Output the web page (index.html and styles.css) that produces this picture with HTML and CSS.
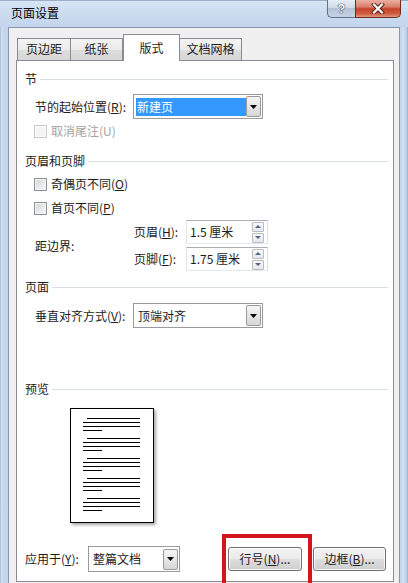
FILE: index.html
```html
<!DOCTYPE html>
<html lang="zh-CN">
<head>
<meta charset="utf-8">
<title>页面设置</title>
<link rel="stylesheet" href="styles.css">
</head>
<body>
<div class="window">
  <div class="titlebar">
    <span class="title">页面设置</span>
    <div class="caption">
      <div class="cap-help">?</div>
      <div class="cap-close">
        <svg width="14" height="11" viewBox="0 0 14 11"><path d="M3 1.5 L11 9.5 M11 1.5 L3 9.5" stroke="#4a2018" stroke-width="4" stroke-linecap="square"/><path d="M3 1.5 L11 9.5 M11 1.5 L3 9.5" stroke="#ffffff" stroke-width="2.2" stroke-linecap="square"/></svg>
      </div>
    </div>
  </div>
  <div class="frame">
    <div class="face">
      <div class="tabs">
        <div class="tab t1">页边距</div>
        <div class="tab t2">纸张</div>
        <div class="tab active">版式</div>
        <div class="tab t4">文档网格</div>
      </div>
      <div class="panel">
        <div class="head">节</div>
        <div class="row r-start">
          <span class="lbl">节的起始位置(<u>R</u>):</span>
          <div class="combo">
            <span class="val sel">新建页</span>
            <span class="drop"><svg width="7" height="4" viewBox="0 0 7 4"><polygon points="0,0 7,0 3.5,4" fill="#000"/></svg></span>
          </div>
        </div>
        <div class="chk r-endnote disabled"><span class="box"></span><span>取消尾注(U)</span></div>

        <div class="head h-hf">页眉和页脚</div>
        <div class="chk r-odd"><span class="box"></span><span>奇偶页不同(<u>O</u>)</span></div>
        <div class="chk r-first"><span class="box"></span><span>首页不同(<u>P</u>)</span></div>
        <div class="margins">
          <span class="mlabel">距边界:</span>
          <div class="spins">
            <div class="spinrow">
              <span class="slabel">页眉(<u>H</u>):</span>
              <div class="spin"><span>1.5 厘米</span>
                <span class="arrows">
                  <span class="arr"><svg width="6" height="3" viewBox="0 0 6 3"><polygon points="0,3 6,3 3,0" fill="#4f6584"/></svg></span>
                  <span class="arr"><svg width="6" height="3" viewBox="0 0 6 3"><polygon points="0,0 6,0 3,3" fill="#4f6584"/></svg></span>
                </span>
              </div>
            </div>
            <div class="spinrow">
              <span class="slabel">页脚(<u>F</u>):</span>
              <div class="spin"><span>1.75 厘米</span>
                <span class="arrows">
                  <span class="arr"><svg width="6" height="3" viewBox="0 0 6 3"><polygon points="0,3 6,3 3,0" fill="#4f6584"/></svg></span>
                  <span class="arr"><svg width="6" height="3" viewBox="0 0 6 3"><polygon points="0,0 6,0 3,3" fill="#4f6584"/></svg></span>
                </span>
              </div>
            </div>
          </div>
        </div>

        <div class="head h-page">页面</div>
        <div class="row r-valign">
          <span class="lbl">垂直对齐方式(<u>V</u>):</span>
          <div class="combo">
            <span class="val">顶端对齐</span>
            <span class="drop"><svg width="7" height="4" viewBox="0 0 7 4"><polygon points="0,0 7,0 3.5,4" fill="#000"/></svg></span>
          </div>
        </div>

        <div class="head h-preview">预览</div>
        <div class="preview">
          <svg width="82" height="113" viewBox="0 0 82 113">
            <g stroke="#000" stroke-width="1.2">
              <path d="M16 9.5H69M12 13.5H69M12 17.5H69M12 21.5H31"/>
              <path d="M16 29.5H69M12 33.5H69M12 37.5H69M12 41.5H31"/>
              <path d="M16 49.5H69M12 53.5H69M12 57.5H69M12 61.5H31"/>
              <path d="M16 69.5H69M12 73.5H69M12 77.5H69M12 81.5H31"/>
              <path d="M16 89.5H69M12 93.5H69M12 97.5H69M12 101.5H31"/>
            </g>
          </svg>
        </div>

        <div class="bottom">
          <span class="blabel">应用于(<u>Y</u>):</span>
          <div class="combo small">
            <span class="val">整篇文档</span>
            <span class="drop"><svg width="7" height="4" viewBox="0 0 7 4"><polygon points="0,0 7,0 3.5,4" fill="#000"/></svg></span>
          </div>
          <div class="btn b-line">行号(<u>N</u>)...</div>
          <div class="btn b-border">边框(<u>B</u>)...</div>
        </div>
      </div>
    </div>
  </div>
  <div class="mark"></div>
</div>
</body>
</html>
```

FILE: styles.css
```css
* { box-sizing: border-box; }
html, body { margin: 0; padding: 0; }
body {
  width: 408px;
  height: 583px;
  overflow: hidden;
  font-family: "Noto Sans CJK SC", "Noto Sans", sans-serif;
  font-size: 12px;
  line-height: 16px;
  color: #1b1b1b;
}
u { text-decoration: underline; text-underline-offset: 1px; }

.window {
  position: relative;
  width: 408px;
  height: 583px;
  display: flex;
  flex-direction: column;
  overflow: hidden;
  background: linear-gradient(90deg, #8fa4bf 0, #d4e2f2 1px, #c3d5ec 4px, #c3d5ec 400px, #d2e0f1 403px, #b8cce6 407px, #8fa4bf 408px);
}

.titlebar {
  height: 27px;
  display: flex;
  align-items: flex-start;
  padding-left: 11px;
  background: linear-gradient(#d7e4f3, #c9daee 60%, #c3d5ec);
  border-top: 1px solid #9cb0c9;
}
.title { margin-top: 4px; font-size: 12px; color: #000; }
.caption { margin-left: auto; margin-right: 7px; display: flex; margin-top: -1px; }
.cap-help {
  width: 28px;
  height: 18px;
  border: 1px solid #5f7088;
  border-top: none;
  border-right: none;
  border-radius: 0 0 0 5px;
  background: linear-gradient(#e6edf6, #d0dbe9 45%, #b3c3d7 50%, #c6d3e3 100%);
  color: #f4f6f9;
  font-family: "Liberation Sans", sans-serif;
  font-weight: bold;
  font-size: 13px;
  line-height: 17px;
  text-align: center;
  text-shadow: 0 0 1px #3d4a5c, 0 0 1px #3d4a5c, 0 0 1px #3d4a5c;
}
.cap-close {
  width: 46px;
  height: 18px;
  border: 1px solid #6e2b20;
  border-top: none;
  border-radius: 0 0 5px 0;
  background: linear-gradient(#eab0a1, #d9806b 40%, #c4432b 52%, #cf5a3f 80%, #e29a80 100%);
  display: flex;
  align-items: center;
  justify-content: center;
}

.frame {
  flex: 1;
  display: flex;
  padding: 0 8px;
}
.face {
  flex: 1;
  display: flex;
  flex-direction: column;
  background: #f0f0f0;
  border: 1px solid #8397b2;
  border-bottom: none;
  padding: 6px 5px 0 7px;
}

.tabs {
  display: flex;
  align-items: flex-end;
  height: 27px;
  margin-bottom: -1px;
  margin-left: 1px;
  position: relative;
  z-index: 1;
}
.tab {
  height: 22px;
  margin-bottom: 1px;
  border: 1px solid #898c95;
  border-bottom: none;
  background: linear-gradient(#f4f4f4, #ebebeb 50%, #dedede 51%, #d6d6d6);
  text-align: center;
  line-height: 20px;
  color: #1b1b1b;
}
.t1 { width: 54px; }
.t2 { width: 52px; border-left: none; }
.active {
  width: 57px;
  height: 27px;
  margin-bottom: 0;
  background: #fff;
  line-height: 26px;
  border-left: 1px solid #898c95;
}
.t4 { width: 62px; border-left: none; }

.panel {
  height: 522px;
  border: 1px solid #898c95;
  background: #fff;
  padding: 10px 5px 0 8px;
}

.head {
  display: flex;
  align-items: center;
  height: 16px;
  gap: 3px;
}
.head::after {
  content: "";
  flex: 1;
  height: 1px;
  background: #d5dfe5;
}
.h-hf { margin-top: 14px; }
.h-page { margin-top: 8px; }
.h-preview { margin-top: 53px; }

.row {
  display: flex;
  align-items: center;
  padding-left: 10px;
}
.r-start { margin-top: 7px; }
.r-valign { margin-top: 8px; }
.lbl { width: 98px; }

.combo {
  width: 130px;
  height: 25px;
  border: 1px solid #9a9a9a;
  background: #fff;
  display: flex;
  align-items: center;
}
.val {
  flex: 1;
  padding-left: 4px;
  color: #1b1b1b;
}
.val.sel {
  margin-left: 2px;
  height: 18px;
  line-height: 18px;
  padding-left: 1px;
  background: #3399ff;
  color: #fff;
}
.drop {
  width: 15px;
  height: 21px;
  margin-right: 1px;
  border: 1px solid #9a9a9a;
  border-radius: 2px;
  background: linear-gradient(#f5f5f5, #e6e6e6 50%, #d6d6d6);
  display: flex;
  align-items: center;
  justify-content: center;
}
.drop svg { display: block; }

.chk {
  display: flex;
  align-items: center;
  gap: 4px;
  height: 16px;
  padding-left: 9px;
}
.r-endnote { margin-top: 4px; }
.r-odd { margin-top: 7px; }
.r-first { margin-top: 8px; }
.box {
  width: 13px;
  height: 13px;
  border: 1px solid #8e8f8f;
  background: linear-gradient(135deg, #cfd3d8, #eeeff1 70%, #f6f6f6);
  box-shadow: inset 0 0 0 1px #f4f4f4;
}
.disabled { color: #a3a3a3; }
.disabled .box {
  border-color: #c8c8c8;
  background: #f4f4f4;
  box-shadow: inset 0 0 0 1px #fff;
}

.margins {
  display: flex;
  align-items: center;
  padding-left: 10px;
  margin-top: 4px;
}
.mlabel { width: 99px; }
.spins {
  display: flex;
  flex-direction: column;
  gap: 3px;
}
.spinrow {
  display: flex;
  align-items: center;
}
.slabel { width: 52px; }
.spin {
  width: 82px;
  height: 24px;
  border: 1px solid #abadb3;
  border-color: #abadb3 #dbdfe6 #e3e9ef #e2e3ea;
  background: #fff;
  display: flex;
  align-items: center;
  padding-left: 3px;
}
.arrows {
  margin-left: auto;
  margin-right: 3px;
  display: flex;
  flex-direction: column;
  gap: 1px;
}
.arr {
  width: 12px;
  height: 10px;
  border: 1px solid #b8bcc4;
  border-radius: 1px;
  background: linear-gradient(#f7f8fa, #e4e7ec);
  display: flex;
  align-items: center;
  justify-content: center;
}
.arr svg { display: block; }

.preview {
  margin-top: 11px;
  margin-left: 45px;
  width: 84px;
  height: 115px;
  border: 1px solid #000;
  background: #fff;
  box-shadow: 2px 2px 3px rgba(0, 0, 0, 0.35);
}
.preview svg { display: block; }

.bottom {
  display: flex;
  align-items: center;
  margin-top: 23px;
  height: 26px;
}
.blabel { width: 63px; }
.combo.small { width: 92px; height: 26px; }
.btn {
  height: 24px;
  border: 1px solid #707070;
  border-radius: 3px;
  background: linear-gradient(#f2f2f2, #ebebeb 50%, #dddddd 51%, #cfcfcf);
  box-shadow: inset 0 0 0 1px rgba(255, 255, 255, 0.75);
  text-align: center;
  line-height: 22px;
  color: #1b1b1b;
}
.b-line { width: 74px; margin-left: 48px; }
.b-border { width: 73px; margin-left: 11px; }

.mark {
  position: absolute;
  left: 222px;
  top: 534px;
  width: 90px;
  height: 60px;
  border: 4px solid #d7141e;
}
```
